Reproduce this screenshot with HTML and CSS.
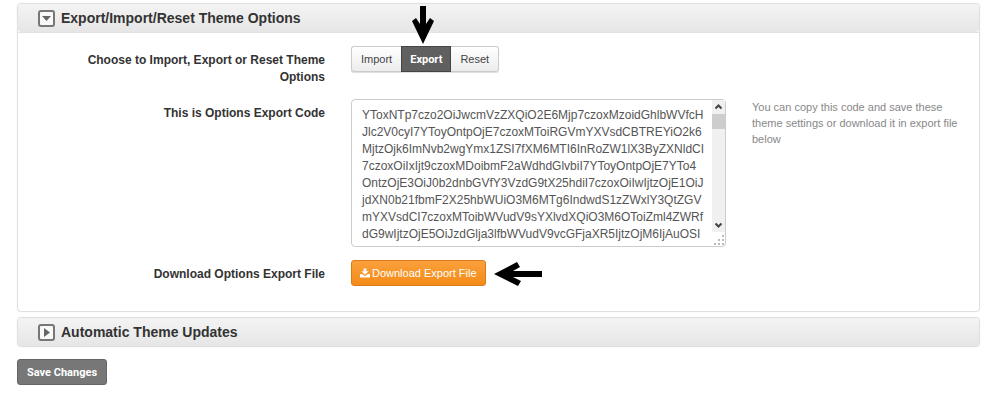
FILE: index.html
```html
<!DOCTYPE html>
<html lang="en">
<head>
<meta charset="utf-8">
<title>Theme Options</title>
<link rel="stylesheet" href="styles.css">
</head>
<body>
<form class="options">
  <section class="panel">
    <h2 class="panel-title">
      <svg class="toggle" viewBox="0 0 17 17" aria-hidden="true"><rect x="1" y="1" width="15" height="15" rx="2" fill="#f8f8f8" stroke="#777" stroke-width="2"/><path d="M4 6h9l-4.500 5z" fill="#666"/></svg>
      Export/Import/Reset Theme Options
    </h2>
    <div class="panel-body">
      <div class="row">
        <span class="label" id="mode-label">Choose to Import, Export or Reset Theme Options</span>
        <div class="control">
          <div class="segments" role="group" aria-labelledby="mode-label">
            <button type="button" class="segment">Import</button>
            <button type="button" class="segment active" aria-pressed="true">Export</button>
            <button type="button" class="segment">Reset</button>
            <svg class="arrow arrow-down" viewBox="0 0 24 38" aria-hidden="true"><path d="M9 0h6v18l4-6 4 3-11 23L1 15l4-3 4 6z" fill="#000"/></svg>
          </div>
        </div>
      </div>
      <div class="row">
        <label class="label" for="code">This is Options Export Code</label>
        <div class="control code-box">
          <textarea class="code" id="code" rows="8" wrap="off" readonly spellcheck="false">YToxNTp7czo2OiJwcmVzZXQiO2E6Mjp7czoxMzoidGhlbWVfcH
Jlc2V0cyI7YToyOntpOjE7czoxMToiRGVmYXVsdCBTREYiO2k6
MjtzOjk6ImNvb2wgYmx1ZSI7fXM6MTI6InRoZW1lX3ByZXNldCI
7czoxOiIxIjt9czoxMDoibmF2aWdhdGlvbiI7YToyOntpOjE7YTo4
OntzOjE3OiJ0b2dnbGVfY3VzdG9tX25hdiI7czoxOiIwIjtzOjE1OiJ
jdXN0b21fbmF2X25hbWUiO3M6MTg6IndwdS1zZWxlY3QtZGV
mYXVsdCI7czoxMToibWVudV9sYXlvdXQiO3M6OToiZml4ZWRf
dG9wIjtzOjE5OiJzdGlja3lfbWVudV9vcGFjaXR5IjtzOjM6IjAuOSI</textarea>
          <div class="scrollbar" aria-hidden="true">
            <svg class="chevron" viewBox="0 0 13 13"><path d="M3.500 8l3-3 3 3" fill="none" stroke="#444" stroke-width="2"/></svg>
            <span class="thumb"></span>
            <svg class="chevron last" viewBox="0 0 13 13"><path d="M3.500 5l3 3 3-3" fill="none" stroke="#444" stroke-width="2"/></svg>
          </div>
          <svg class="grip" viewBox="0 0 11 11" aria-hidden="true"><path d="M8 0h2v2H8zM8 4h2v2H8zM8 8h2v2H8zM4 4h2v2H4zM4 8h2v2H4zM0 8h2v2H0z" fill="#bbb"/></svg>
        </div>
        <p class="help">You can copy this code and save these theme settings or download it in export file below</p>
      </div>
      <div class="row">
        <span class="label">Download Options Export File</span>
        <div class="control">
          <div class="download-wrap">
            <button type="button" class="download">
              <svg class="download-icon" viewBox="0 0 11 10" aria-hidden="true"><path d="M4 0h3v3h2.500L5.500 7 1.500 3H4zM0 6h2.500l3 2.500 3-2.500H11v4H0z" fill="#fff"/></svg>
              Download Export File
            </button>
            <svg class="arrow arrow-left" viewBox="0 0 48 24" aria-hidden="true"><path d="M0 12L23 0l3 5-7 4h29v6H19l8 4-3 5z" fill="#000"/></svg>
          </div>
        </div>
      </div>
    </div>
  </section>
  <section class="panel">
    <h2 class="panel-title">
      <svg class="toggle" viewBox="0 0 17 17" aria-hidden="true"><rect x="1" y="1" width="15" height="15" rx="2" fill="#f8f8f8" stroke="#777" stroke-width="2"/><path d="M6 4v9l6-4.500z" fill="#666"/></svg>
      Automatic Theme Updates
    </h2>
  </section>
  <button type="button" class="save">Save Changes</button>
</form>
</body>
</html>
```
FILE: styles.css
```css
* {
  box-sizing: border-box;
}

body {
  margin: 0;
  background: #fff;
  color: #333;
  font-family: "Liberation Sans", Arial, sans-serif;
  font-size: 12px;
  line-height: 17px;
}

button,
textarea {
  font-family: inherit;
  margin: 0;
}

.options {
  padding: 3px 20px 16px 17px;
}

.panel {
  margin-bottom: 5px;
  border: 1px solid #dfdfdf;
  border-radius: 4px;
  box-shadow: 0 0 1px #ddd;
}

.panel-title {
  display: flex;
  align-items: center;
  gap: 6px;
  height: 28px;
  margin: 0;
  padding: 0 20px;
  border-radius: 3px;
  background: linear-gradient(#f4f4f4, #e6e6e6);
  font-size: 14px;
  color: #333;
}

.toggle {
  width: 17px;
  height: 17px;
}

.panel-body {
  display: flex;
  flex-direction: column;
  gap: 13px;
  padding: 13px 13px 25px 50px;
  border-top: 1px solid #e2e2e2;
}

.row {
  display: grid;
  grid-template-columns: 257fr 375fr 214fr;
  column-gap: 26px;
}

.label {
  padding-top: 6px;
  font-weight: bold;
  text-align: right;
}

.control {
  min-width: 0;
}

.segments {
  position: relative;
  display: inline-flex;
  border-radius: 3px;
  box-shadow: 0 1px 1px #ddd;
}

.segment {
  height: 26px;
  padding: 0 9px;
  border: 1px solid #ccc;
  border-width: 1px 0;
  background: linear-gradient(#fff, #ececec);
  color: #444;
  font-size: 11px;
}

.segment:first-child {
  border-left-width: 1px;
  border-radius: 3px 0 0 3px;
}

.segment:nth-child(3) {
  border-right-width: 1px;
  border-radius: 0 3px 3px 0;
}

.segment.active {
  padding: 0 8px;
  border: 1px solid #444;
  background: #606060;
  color: #fff;
  font-family: Roboto, sans-serif;
  font-weight: bold;
}

.arrow {
  position: absolute;
}

.arrow-down {
  left: 60px;
  bottom: 28px;
  width: 24px;
  height: 38px;
}

.arrow-left {
  left: 100%;
  top: 2px;
  width: 48px;
  height: 24px;
  margin-left: 8px;
}

.code-box {
  position: relative;
}

.code {
  display: block;
  width: 100%;
  height: 148px;
  padding: 7px 10px 0;
  border: 1px solid #ccc;
  border-radius: 4px;
  background: #fff;
  color: #555;
  font-size: 12px;
  line-height: 17px;
  overflow: hidden;
  resize: none;
}

.scrollbar {
  position: absolute;
  top: 1px;
  right: 1px;
  bottom: 15px;
  display: flex;
  flex-direction: column;
  width: 13px;
  background: #f0f0f0;
}

.chevron {
  width: 13px;
  height: 14px;
}

.chevron.last {
  margin-top: auto;
}

.thumb {
  height: 15px;
  background: #cdcdcd;
}

.grip {
  position: absolute;
  right: 1px;
  bottom: 1px;
  width: 11px;
  height: 11px;
}

.help {
  margin: 0;
  color: #888;
  font-size: 11px;
  line-height: 16px;
}

.download-wrap {
  position: relative;
  display: inline-flex;
}

.download {
  display: flex;
  align-items: center;
  gap: 2px;
  height: 26px;
  padding: 0 8px;
  border: 1px solid #d97b16;
  border-radius: 3px;
  background: linear-gradient(#faa03c, #f48b18);
  color: #fff;
  font-size: 11px;
}

.download-icon {
  width: 10px;
  height: 10px;
}

.save {
  height: 26px;
  margin-top: 7px;
  padding: 0 9px;
  border: 1px solid #666;
  border-radius: 3px;
  background: #777;
  color: #fff;
  font-family: Roboto, sans-serif;
  font-size: 11px;
  font-weight: bold;
}
```
